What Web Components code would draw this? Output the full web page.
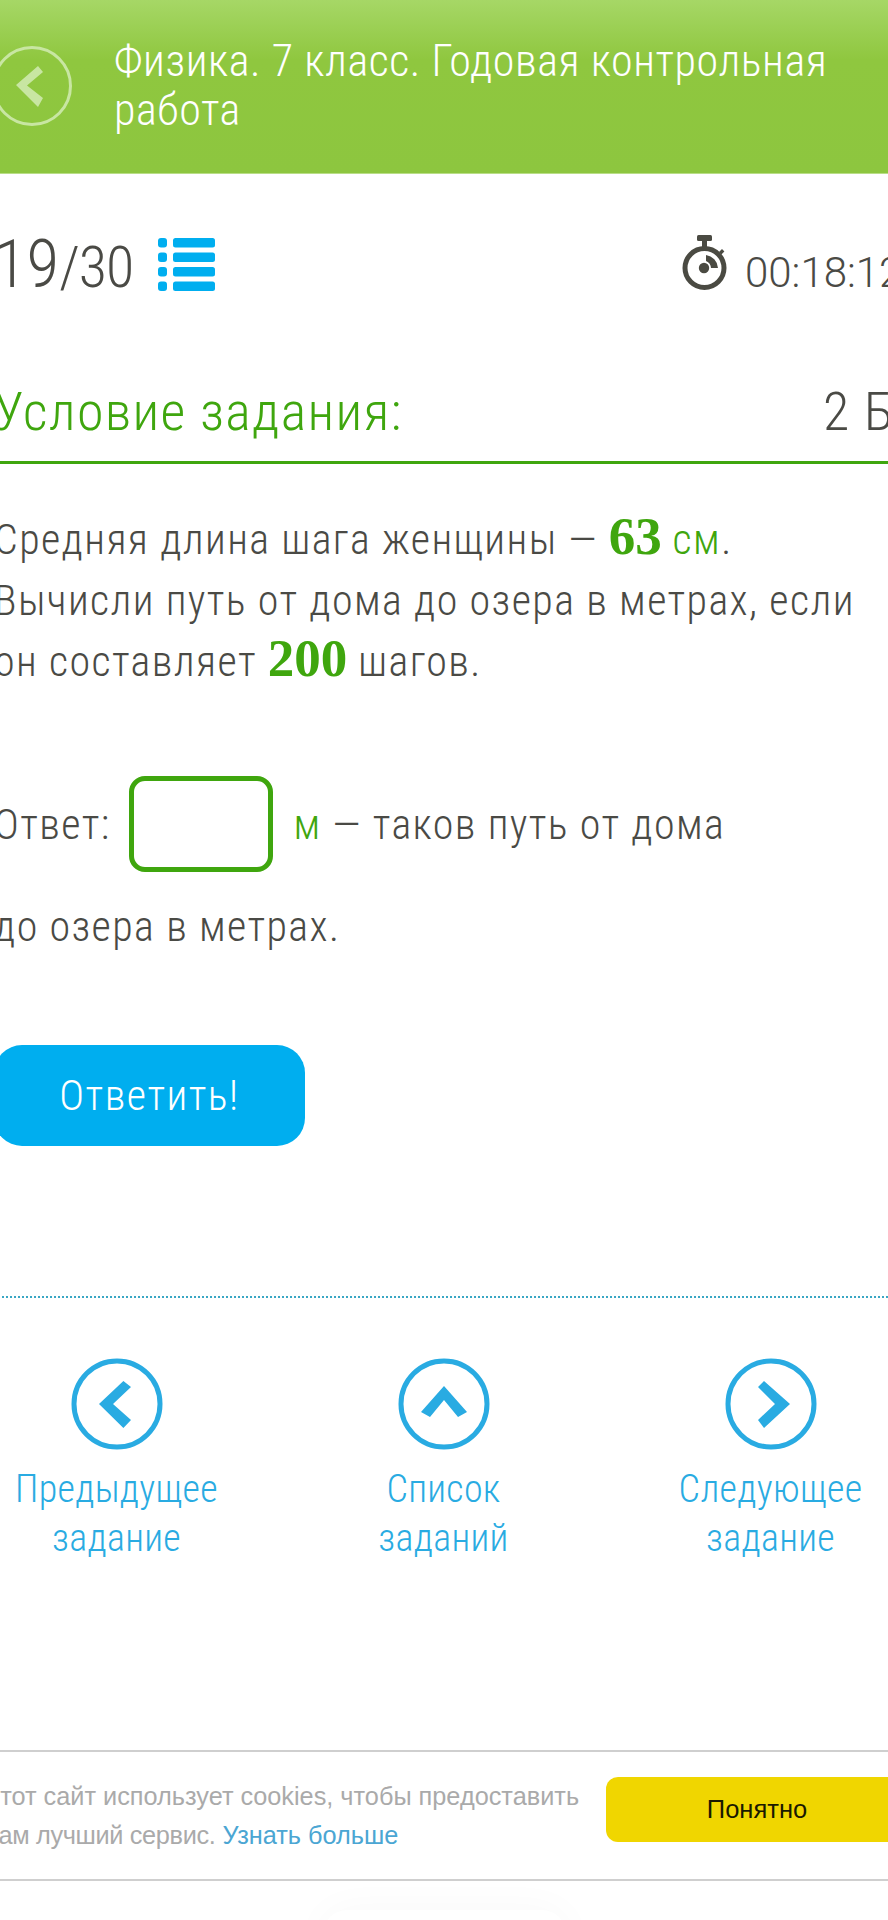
<!DOCTYPE html>
<html lang="ru">
<head>
<meta charset="utf-8">
<title>Физика. 7 класс</title>
<style>
  html, body { margin: 0; padding: 0; background: #fff; width: 888px; height: 1920px; overflow: hidden; }
  body { font-family: Roboto, sans-serif; font-weight: 300; font-stretch: 75%; color: #4a4a45; position: relative; }
  quiz-page { width: 930px; margin-left: -6px; }
</style>
</head>
<body>

<template id="page-tpl">
  <style>
    :host { display: block; }
  </style>
  <slot></slot>
</template>

<template id="header-tpl">
  <style>
    :host {
      display: flex;
      align-items: center;
      box-sizing: border-box;
      height: 174px;
      padding-bottom: 2px;
      background: linear-gradient(#a6d766 0, #8fc73f 60px, #8dc63f 100%);
      border-bottom: 1px solid #b9de87;
      color: #fff;
      font-size: 44px;
      letter-spacing: 0.6px;
      line-height: 49px;
    }
    svg { flex: none; width: 80px; height: 80px; margin-left: -2px; }
    .title { margin-left: 42px; width: 770px; }
  </style>
  <svg viewBox="0 0 80 80">
    <circle cx="40" cy="40" r="38.5" fill="none" stroke="#c8e6a2" stroke-width="3"/>
    <path d="M24 39 L46 20 L51 26 L35 39.5 L51 52 L46 61 Z" fill="#c8e6a2"/>
  </svg>
  <div class="title"><slot></slot></div>
</template>

<template id="progress-tpl">
  <style>
    :host {
      display: flex;
      justify-content: space-between;
      align-items: flex-end;
      height: 117px;
      color: #4a4a45;
    }
    .count { display: flex; align-items: flex-end; }
    .now { font-size: 67px; line-height: 66px; margin-bottom: -6px; }
    .all { font-size: 58px; line-height: 54px; margin-bottom: -3px; letter-spacing: -1px; }
    .list { width: 57px; height: 53px; margin-left: 25px; display: block; }
    .timer { display: flex; align-items: flex-end; width: 242px; flex: none; }
    .timer svg { width: 46px; height: 58px; flex: none; margin-bottom: -2px; }
    .time { font-size: 42px; line-height: 42px; margin-left: 17px; white-space: nowrap; margin-bottom: -3px; font-stretch: 100%; }
  </style>
  <div class="count">
    <span class="now"><slot name="now"></slot></span><span class="all"><slot name="all"></slot></span>
    <svg class="list" viewBox="0 0 57 53" fill="#00aeef">
      <rect x="0" y="0" width="9" height="9.5" rx="3"/><rect x="15" y="0" width="42" height="9.5" rx="2.5"/>
      <rect x="0" y="14.4" width="9" height="9.5" rx="3"/><rect x="15" y="14.4" width="42" height="9.5" rx="2.5"/>
      <rect x="0" y="29" width="9" height="9.5" rx="3"/><rect x="15" y="29" width="42" height="9.5" rx="2.5"/>
      <rect x="0" y="43.4" width="9" height="9.5" rx="3"/><rect x="15" y="43.4" width="42" height="9.5" rx="2.5"/>
    </svg>
  </div>
  <div class="timer">
    <svg viewBox="0 0 46 58">
      <g fill="#4a4a42">
        <rect x="15" y="0" width="15" height="6" rx="1.5"/>
        <rect x="20" y="6" width="5" height="7"/>
        <path d="M37 17 l3 -3 l2.4 2.4 l-3 3 Z"/>
        <circle cx="22" cy="33" r="5.2"/>
        <path d="M24 20 A14 14 0 0 1 36 33 L29 33 A8 8 0 0 0 24 26 Z"/>
      </g>
      <circle cx="22.5" cy="33" r="19.5" fill="none" stroke="#4a4a42" stroke-width="5"/>
    </svg>
    <span class="time"><slot></slot></span>
  </div>
</template>

<template id="heading-tpl">
  <style>
    :host {
      display: flex;
      justify-content: space-between;
      align-items: flex-end;
      box-sizing: border-box;
      height: 173px;
      padding-bottom: 20px;
      border-bottom: 3px solid #3fa60e;
      font-size: 54px;
      letter-spacing: 1.3px;
      line-height: 58px;
      color: #3fa60e;
    }
    .points { width: 101px; flex: none; color: #4a4a45; white-space: nowrap; }
  </style>
  <span><slot></slot></span>
  <span class="points"><slot name="points"></slot></span>
</template>

<template id="question-tpl">
  <style>
    :host {
      display: block;
      margin-top: 45px;
      font-size: 42px;
      letter-spacing: 1.4px;
      line-height: 61px;
      color: #4a4a45;
    }
    ::slotted(b) { font-family: "Liberation Serif", serif; font-weight: 700; font-size: 53px; letter-spacing: 0; line-height: 40px; color: #3fa60e; }
    ::slotted(em) { font-style: normal; color: #3fa60e; }
  </style>
  <slot></slot>
</template>

<template id="answer-tpl">
  <style>
    :host {
      display: block;
      margin-top: 82px;
      font-size: 42px;
      letter-spacing: 1.4px;
      line-height: 102px;
      color: #4a4a45;
    }
    .box {
      display: inline-block;
      box-sizing: border-box;
      width: 144px;
      height: 96px;
      margin: 0 10px 0 18px;
      vertical-align: -33px;
      border: 5px solid #3fa60e;
      border-radius: 16px;
      background: #fff;
    }
    ::slotted(em) { font-style: normal; color: #3fa60e; }
  </style>
  <slot name="before"></slot><span class="box"></span><slot></slot>
</template>

<template id="submit-tpl">
  <style>
    :host {
      display: flex;
      align-items: center;
      justify-content: center;
      width: 311px;
      height: 101px;
      margin-top: 67px;
      border-radius: 28px;
      background: #00aeef;
      color: #fff;
      font-size: 42px;
      letter-spacing: 1.5px;
    }
  </style>
  <slot></slot>
</template>

<template id="nav-tpl">
  <style>
    :host {
      display: grid;
      grid-template-columns: repeat(3, 327px);
      margin: 150px 0 0 -41px;
      padding-top: 60px;
      border-top: 2px dotted #3aa7c4;
    }
  </style>
  <slot></slot>
</template>

<template id="navlink-tpl">
  <style>
    :host {
      display: flex;
      flex-direction: column;
      align-items: center;
      color: #29abe2;
      font-size: 38px;
      letter-spacing: 0.3px;
      line-height: 49px;
      text-align: center;
    }
    svg { width: 92px; height: 92px; margin-bottom: 15px; display: block; }
  </style>
  <svg viewBox="0 0 92 92">
    <circle cx="46" cy="46" r="43" fill="none" stroke="#29abe2" stroke-width="5"/>
    <path id="arrow" fill="#29abe2"/>
  </svg>
  <div><slot></slot></div>
</template>

<template id="cookie-tpl">
  <style>
    :host {
      display: flex;
      align-items: center;
      box-sizing: border-box;
      position: absolute;
      left: 0;
      top: 1750px;
      width: 888px;
      height: 131px;
      border-top: 2px solid #cfcfcf;
      border-bottom: 2px solid #cfcfcf;
      background: #fff;
      font-family: "Liberation Sans", Arial, sans-serif;
      font-weight: 400;
      font-stretch: 100%;
      font-size: 25.3px;
      line-height: 39px;
      color: #aaa;
      overflow: hidden;
    }
    .text { flex: none; width: 624px; margin-left: -18px; white-space: nowrap; }
    ::slotted(a) { color: #4ba6d3; text-decoration: none; }
    ::slotted(span.tight) { letter-spacing: -0.34px; }
    .btn {
      flex: none;
      display: flex;
      align-items: center;
      justify-content: center;
      width: 302px;
      height: 65px;
      margin-bottom: 12px;
      border-radius: 12px;
      background: #f0d600;
      color: #1a1a00;
      font-size: 25.5px;
    }
  </style>
  <div class="text"><slot></slot></div>
  <div class="btn"><slot name="action"></slot></div>
</template>

<template id="pill-tpl">
  <style>
    :host {
      display: block;
      position: absolute;
      left: 323px;
      top: 1910px;
      width: 243px;
      height: 60px;
      border-radius: 24px;
      background: #fff;
      box-shadow: 0 0 40px rgba(0, 0, 0, 0.03);
    }
  </style>
</template>

<script>
  function plain(name, tplId) {
    customElements.define(name, class extends HTMLElement {
      constructor() {
        super();
        this.attachShadow({ mode: "open" });
        this.shadowRoot.appendChild(document.getElementById(tplId).content.cloneNode(true));
      }
    });
  }

  plain("quiz-page", "page-tpl");
  plain("quiz-header", "header-tpl");
  plain("quiz-progress", "progress-tpl");
  plain("quiz-heading", "heading-tpl");
  plain("quiz-question", "question-tpl");
  plain("quiz-answer", "answer-tpl");
  plain("quiz-submit", "submit-tpl");
  plain("quiz-nav", "nav-tpl");
  plain("cookie-bar", "cookie-tpl");
  plain("bottom-pill", "pill-tpl");

  const arrows = {
    left: "M28 46 L52.4 23 L60 29 L42 46 L60 62 L52.4 70 Z",
    up: "M46 28 L69 54 L60 59 L46 42 L32 59 L23 54 Z",
    right: "M65 46 L39 23 L33 29 L50 46 L33 62 L39 70 Z"
  };

  class NavLink extends HTMLElement {
    constructor() {
      super();
      this.attachShadow({ mode: "open" });
      this.shadowRoot.appendChild(document.getElementById("navlink-tpl").content.cloneNode(true));
    }
    connectedCallback() {
      this.shadowRoot.getElementById("arrow").setAttribute("d", arrows[this.getAttribute("dir")]);
    }
  }
  customElements.define("nav-link", NavLink);
</script>

<quiz-page>
  <quiz-header>Физика. 7 класс. Годовая контрольная работа</quiz-header>
  <quiz-progress>
    <span slot="now">19</span><span slot="all">/30</span>
    00:18:12
  </quiz-progress>
  <quiz-heading>Условие задания:<span slot="points">2 Б.</span></quiz-heading>
  <quiz-question>
    Средняя длина шага женщины — <b>63</b> <em>см</em>.<br>
    Вычисли путь от дома до озера в метрах, если<br>
    он составляет <b>200</b> шагов.
  </quiz-question>
  <quiz-answer>
    <span slot="before">Ответ:</span>
    <em>м</em> — таков путь от дома<br>до озера в метрах.
  </quiz-answer>
  <quiz-submit>Ответить!</quiz-submit>
  <quiz-nav>
    <nav-link dir="left">Предыдущее<br>задание</nav-link>
    <nav-link dir="up">Список<br>заданий</nav-link>
    <nav-link dir="right">Следующее<br>задание</nav-link>
  </quiz-nav>
</quiz-page>

<cookie-bar>
  Этот сайт использует cookies, чтобы предоставить<br><span class="tight">Вам лучший сервис.</span> <a>Узнать больше</a>
  <span slot="action">Понятно</span>
</cookie-bar>
<bottom-pill></bottom-pill>

</body>
</html>
